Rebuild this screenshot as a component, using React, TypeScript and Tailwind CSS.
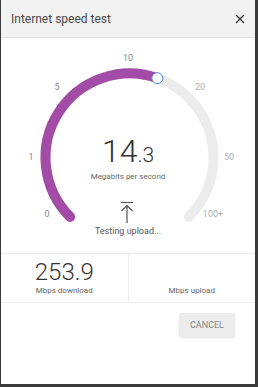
import React from 'react';

const CX = 128.5;
const CY = 119.5;
const R = 84;

function pt(deg: number) {
  const a = (deg * Math.PI) / 180;
  return { x: CX + R * Math.sin(a), y: CY - R * Math.cos(a) };
}

function Gauge({ angle }: { angle: number }) {
  const s = pt(-135);
  const e = pt(135);
  const h = pt(angle);
  const large = angle + 135 > 180 ? 1 : 0;
  return (
    <svg className="absolute left-0 top-0" width="254" height="215" viewBox="0 0 254 215">
      <path
        d={`M ${s.x} ${s.y} A ${R} ${R} 0 1 1 ${e.x} ${e.y}`}
        fill="none"
        stroke="#ececec"
        strokeWidth={10}
        strokeLinecap="round"
      />
      <path
        d={`M ${s.x} ${s.y} A ${R} ${R} 0 ${large} 1 ${h.x} ${h.y}`}
        fill="none"
        stroke="#a24ba7"
        strokeWidth={10}
        strokeLinecap="round"
      />
      <circle cx={h.x} cy={h.y} r={5.5} fill="#fff" stroke="#4a86f0" strokeWidth={1} />
    </svg>
  );
}

export default function App() {
  // 14.3 sits between the 10 (0deg) and 20 (45deg) marks
  const angle = (4.3 / 10) * 45;

  return (
    <div className="w-[258px] h-[387px] bg-[#3b3b3b] font-['Roboto','Liberation_Sans',sans-serif]">
      <div className="ml-[1px] w-[254px] h-[384px] bg-white flex flex-col">
        {/* Header */}
        <div className="h-[38px] shrink-0 bg-[#f2f2f2] border-b border-[#e2e2e2] flex items-center justify-between pl-[10px] pr-[10px]">
          <span className="text-[12px] leading-none text-[#4a4a4a]">Internet speed test</span>
          <svg width="10" height="10" viewBox="0 0 10 10">
            <path d="M1 1 L9 9 M9 1 L1 9" stroke="#333" strokeWidth={1.3} />
          </svg>
        </div>

        {/* Gauge */}
        <div className="relative h-[215px] shrink-0">
          <Gauge angle={angle} />
          <span className="absolute left-[46px] top-[176px] -translate-x-1/2 -translate-y-1/2 text-[9px] leading-none text-[#888]">0</span>
          <span className="absolute left-[30px] top-[119px] -translate-x-1/2 -translate-y-1/2 text-[9px] leading-none text-[#888]">1</span>
          <span className="absolute left-[56px] top-[49px] -translate-x-1/2 -translate-y-1/2 text-[9px] leading-none text-[#888]">5</span>
          <span className="absolute left-[127px] top-[20px] -translate-x-1/2 -translate-y-1/2 text-[9px] leading-none text-[#888]">10</span>
          <span className="absolute left-[199px] top-[49px] -translate-x-1/2 -translate-y-1/2 text-[9px] leading-none text-[#b0b0b0]">20</span>
          <span className="absolute left-[228px] top-[119px] -translate-x-1/2 -translate-y-1/2 text-[9px] leading-none text-[#b0b0b0]">50</span>
          <span className="absolute left-[212px] top-[176px] -translate-x-1/2 -translate-y-1/2 text-[9px] leading-none text-[#b0b0b0]">100+</span>

          <div className="relative flex flex-col items-center pt-[97px]">
            <div className="leading-none text-[#333] font-light">
              <span className="text-[32px]">14</span>
              <span className="text-[21px]">.3</span>
            </div>
            <span className="mt-[6px] text-[8px] leading-none text-[#666]">Megabits per second</span>
            <svg className="mt-[20px] -ml-[2px]" width="14" height="22" viewBox="0 0 14 22">
              <path d="M1 1.5 H13 M7 4.5 V22 M1.5 10 L7 4.5 L12.5 10" fill="none" stroke="#555" strokeWidth={1.2} />
            </svg>
            <span className="mt-[4px] text-[9px] leading-none text-[#555]">Testing upload...</span>
          </div>
        </div>

        {/* Results */}
        <div className="h-[50px] shrink-0 border-t border-b border-[#ececec] flex">
          <div className="flex-1 flex flex-col items-center justify-end pb-[7px] border-r border-[#ececec]">
            <span className="text-[24px] leading-[26px] font-light text-[#333]">253.9</span>
            <span className="mt-[2px] text-[8px] leading-none text-[#666]">Mbps download</span>
          </div>
          <div className="flex-1 flex flex-col items-center justify-end pb-[7px]">
            <span className="text-[8px] leading-none text-[#666]">Mbps upload</span>
          </div>
        </div>

        {/* Actions */}
        <div className="flex justify-end pt-[10px] pr-[20px]">
          <button className="w-[56px] h-[24px] rounded-[3px] bg-[#ececec] shadow-[0_1px_2px_rgba(0,0,0,0.12)] text-[9px] leading-none text-[#888]">
            CANCEL
          </button>
        </div>
      </div>
    </div>
  );
}
